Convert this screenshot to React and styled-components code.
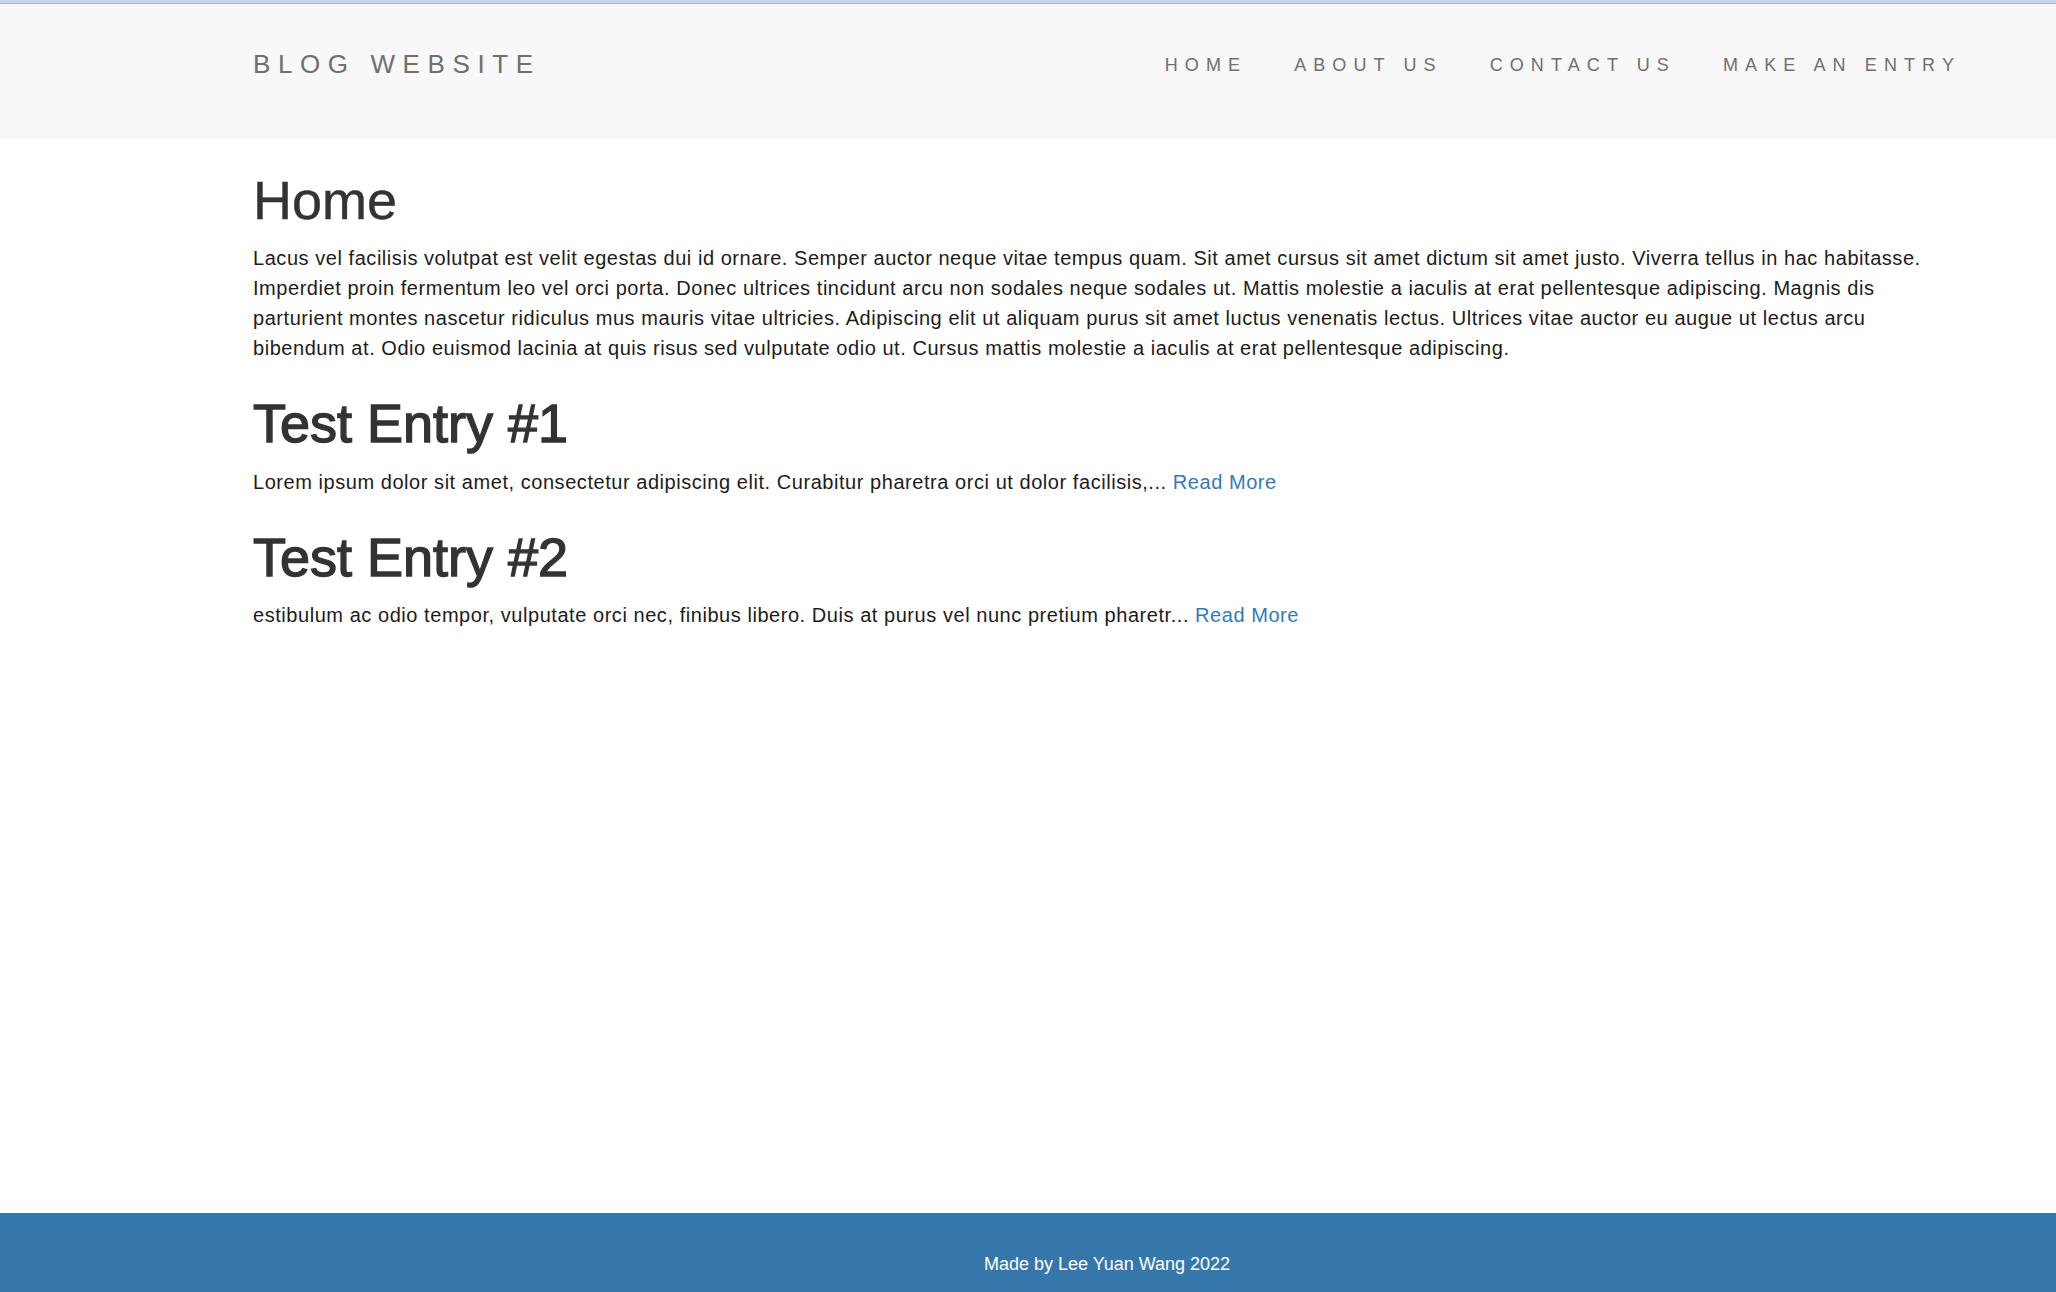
import React from 'react'
import styled, { createGlobalStyle } from 'styled-components'

const GlobalStyle = createGlobalStyle`
body {
  margin: 0;
  font-family: "Liberation Sans", Arial, Helvetica, sans-serif;
  background: #fff;
}
`

const Page = styled.div`
min-height: 100vh;
display: flex;
flex-direction: column;
`

const TopStrip = styled.div`
height: 3px;
background: #c4d1ee;
border-bottom: 1px solid #a9b6d2;
`

const NavBar = styled.header`
height: 135px;
box-sizing: border-box;
background: #f8f8f8;
display: flex;
justify-content: space-between;
align-items: flex-start;
padding: 46px 95px 0 253px;
`

const Brand = styled.a`
font-size: 26px;
letter-spacing: 7.6px;
color: #6f6f6f;
text-decoration: none;
line-height: 1.15;
`

const NavLinks = styled.nav`
display: flex;
gap: 47px;
margin-top: 5px;
`

const NavLink = styled.a`
font-size: 18px;
letter-spacing: 7.1px;
color: #6f6f6f;
text-decoration: none;
line-height: 1.15;
`

const Main = styled.main`
flex: 1;
padding: 32px 121px 0 253px;
`

const Title = styled.h1`
margin: 0 0 13px;
font-size: 54px;
line-height: 1.1;
font-weight: 400;
color: #333;
-webkit-text-stroke: ${p => (p.$strong ? '1.4px #333' : '0.4px #333')};
`

const Text = styled.p`
margin: 0 0 31px;
font-size: 20px;
letter-spacing: 0.55px;
line-height: 30px;
color: #1c1c1c;
`

const ReadMore = styled.a`
color: #337ab7;
text-decoration: none;
`

const Footer = styled.footer`
height: 79px;
box-sizing: border-box;
background: #3577aa;
color: #fff;
font-size: 18px;
text-align: center;
padding: 41px 95px 0 253px;
overflow: hidden;
`

const entries = [
  {
    title: 'Test Entry #1',
    excerpt: 'Lorem ipsum dolor sit amet, consectetur adipiscing elit. Curabitur pharetra orci ut dolor facilisis,...',
  },
  {
    title: 'Test Entry #2',
    excerpt: 'estibulum ac odio tempor, vulputate orci nec, finibus libero. Duis at purus vel nunc pretium pharetr...',
  },
]

const App = () => {
  return (
    <>
      <GlobalStyle />
      <Page>
        <TopStrip />
        <NavBar>
          <Brand href="#">BLOG WEBSITE</Brand>
          <NavLinks>
            <NavLink href="#">HOME</NavLink>
            <NavLink href="#">ABOUT US</NavLink>
            <NavLink href="#">CONTACT US</NavLink>
            <NavLink href="#">MAKE AN ENTRY</NavLink>
          </NavLinks>
        </NavBar>
        <Main>
          <Title>Home</Title>
          <Text>
            Lacus vel facilisis volutpat est velit egestas dui id ornare. Semper auctor neque vitae tempus quam. Sit amet cursus sit amet dictum sit amet justo. Viverra tellus in hac habitasse. Imperdiet proin fermentum leo vel orci porta. Donec ultrices tincidunt arcu non sodales neque sodales ut. Mattis molestie a iaculis at erat pellentesque adipiscing. Magnis dis parturient montes nascetur ridiculus mus mauris vitae ultricies. Adipiscing elit ut aliquam purus sit amet luctus venenatis lectus. Ultrices vitae auctor eu augue ut lectus arcu bibendum at. Odio euismod lacinia at quis risus sed vulputate odio ut. Cursus mattis molestie a iaculis at erat pellentesque adipiscing.
          </Text>
          {entries.map(entry => (
            <div key={entry.title}>
              <Title $strong>{entry.title}</Title>
              <Text>
                {entry.excerpt} <ReadMore href="#">Read More</ReadMore>
              </Text>
            </div>
          ))}
        </Main>
        <Footer>Made by Lee Yuan Wang 2022</Footer>
      </Page>
    </>
  )
}

export default App
